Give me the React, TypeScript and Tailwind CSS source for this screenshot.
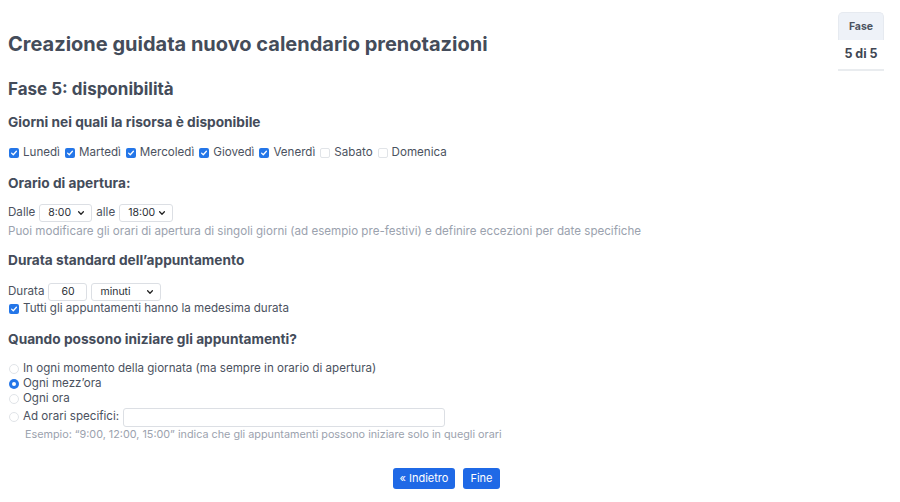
import { useState } from 'react';

const days = [
  { label: 'Lunedì', on: true },
  { label: 'Martedì', on: true },
  { label: 'Mercoledì', on: true },
  { label: 'Giovedì', on: true },
  { label: 'Venerdì', on: true },
  { label: 'Sabato', on: false },
  { label: 'Domenica', on: false },
];

const startOptions = [
  'In ogni momento della giornata (ma sempre in orario di apertura)',
  'Ogni mezz’ora',
  'Ogni ora',
];

const Check = ({ on }: { on: boolean }) =>
  on ? (
    <span className="inline-flex h-[10px] w-[10px] items-center justify-center rounded-[2px] bg-[#2476e8]">
      <svg viewBox="0 0 10 10" className="h-[8px] w-[8px]">
        <path d="M2 5.2 4.1 7.2 8 2.8" fill="none" stroke="#fff" strokeWidth="1.6" strokeLinecap="round" strokeLinejoin="round" />
      </svg>
    </span>
  ) : (
    <span className="inline-block h-[10px] w-[10px] rounded-[2px] border border-[#e1e4e8] bg-white" />
  );

const Radio = ({ on }: { on: boolean }) =>
  on ? (
    <span className="inline-flex h-[10px] w-[10px] items-center justify-center rounded-full bg-[#2476e8]">
      <span className="h-[4px] w-[4px] rounded-full bg-white" />
    </span>
  ) : (
    <span className="inline-block h-[10px] w-[10px] rounded-full border border-[#e1e4e8] bg-white" />
  );

const Select = ({ value, width }: { value: string; width: string }) => (
  <span
    className={`inline-flex h-[18px] items-center justify-between rounded-[3px] border border-[#dcdfe4] bg-white pl-[8px] pr-[6px] text-[10.5px] text-[#2b2f36] ${width}`}
  >
    <span>{value}</span>
    <svg viewBox="0 0 10 10" className="h-[8px] w-[8px]">
      <path d="M2 3.5 5 6.5 8 3.5" fill="none" stroke="#222" strokeWidth="1.6" strokeLinecap="round" strokeLinejoin="round" />
    </svg>
  </span>
);

export default function App() {
  const [mode, setMode] = useState(1);

  return (
    <div className="relative min-h-[502px] w-[900px] bg-white font-['Inter','Liberation_Sans',sans-serif] text-[11.6px] text-[#4b5260]">
      <div className="flex">
        <div className="flex-1 pl-[8px]">
          <h1 className="mt-[31px] text-[20px] font-bold leading-[26px] text-[#444c5a]">
            Creazione guidata nuovo calendario prenotazioni
          </h1>
          <h2 className="mt-[21px] text-[17px] font-bold leading-[22px] text-[#444c5a]">Fase 5: disponibilità</h2>

          <h3 className="mt-[13px] text-[13.7px] font-bold leading-[18px] text-[#444c5a]">
            Giorni nei quali la risorsa è disponibile
          </h3>
          <div className="mt-[14px] flex h-[16px] items-center gap-[5px] pl-[1px]">
            {days.map((d) => (
              <label key={d.label} className="flex items-center gap-[4px]">
                <Check on={d.on} />
                <span>{d.label}</span>
              </label>
            ))}
          </div>

          <h3 className="mt-[13px] text-[13.7px] font-bold leading-[18px] text-[#444c5a]">Orario di apertura:</h3>
          <div className="mt-[12px] flex h-[18px] items-center gap-[4px]">
            <span>Dalle</span>
            <Select value="8:00" width="w-[53px]" />
            <span>alle</span>
            <Select value="18:00" width="w-[54px]" />
          </div>
          <p className="mt-[1px] leading-[16px] text-[#9ba2ae]">
            Puoi modificare gli orari di apertura di singoli giorni (ad esempio pre-festivi) e definire eccezioni per date specifiche
          </p>

          <h3 className="mt-[12px] text-[13.7px] font-bold leading-[18px] text-[#444c5a]">
            Durata standard dell’appuntamento
          </h3>
          <div className="mt-[14px] flex h-[18px] items-center gap-[4px]">
            <span>Durata</span>
            <span className="inline-flex h-[18px] w-[39px] items-center justify-center rounded-[3px] border border-[#dcdfe4] text-[10.5px] text-[#2b2f36]">
              60
            </span>
            <Select value="minuti" width="w-[70px]" />
          </div>
          <label className="flex h-[16px] items-center gap-[4px] pl-[1px]">
            <Check on />
            <span>Tutti gli appuntamenti hanno la medesima durata</span>
          </label>

          <h3 className="mt-[13px] text-[13.7px] font-bold leading-[18px] text-[#444c5a]">
            Quando possono iniziare gli appuntamenti?
          </h3>
          <div className="mt-[13px] flex flex-col pl-[1px]">
            {startOptions.map((o, i) => (
              <label key={o} className="flex h-[15px] items-center gap-[4px]" onClick={() => setMode(i)}>
                <Radio on={mode === i} />
                <span>{o}</span>
              </label>
            ))}
            <label className="mt-[1px] flex h-[20px] items-center gap-[4px]" onClick={() => setMode(3)}>
              <Radio on={mode === 3} />
              <span>Ad orari specifici:</span>
              <span className="inline-block h-[19px] w-[322px] rounded-[3px] border border-[#dcdfe4] bg-white" />
            </label>
            <p className="pl-[16px] text-[10.8px] leading-[16px] text-[#9ba2ae]">
              Esempio: “9:00, 12:00, 15:00” indica che gli appuntamenti possono iniziare solo in quegli orari
            </p>
          </div>
        </div>

        <aside className="mr-[16px] mt-[12px] w-[46px] text-center font-bold">
          <div className="flex h-[28px] items-center justify-center rounded-t-[5px] border border-b-0 border-[#e6eaf0] bg-[#eef2f8] text-[10.5px] text-[#4b5260]">
            Fase
          </div>
          <div className="flex h-[31px] items-center justify-center border-b-2 border-[#e9ecef] text-[12.5px] text-[#3f4653]">
            5 di 5
          </div>
        </aside>
      </div>

      <div className="mt-[25px] flex justify-center gap-[8px] pr-[8px]">
        <button className="h-[21px] rounded-[3px] bg-[#1f69e6] px-[7px] text-[11px] text-white">« Indietro</button>
        <button className="h-[21px] rounded-[3px] bg-[#1f69e6] px-[7px] text-[11px] text-white">Fine</button>
      </div>
    </div>
  );
}
